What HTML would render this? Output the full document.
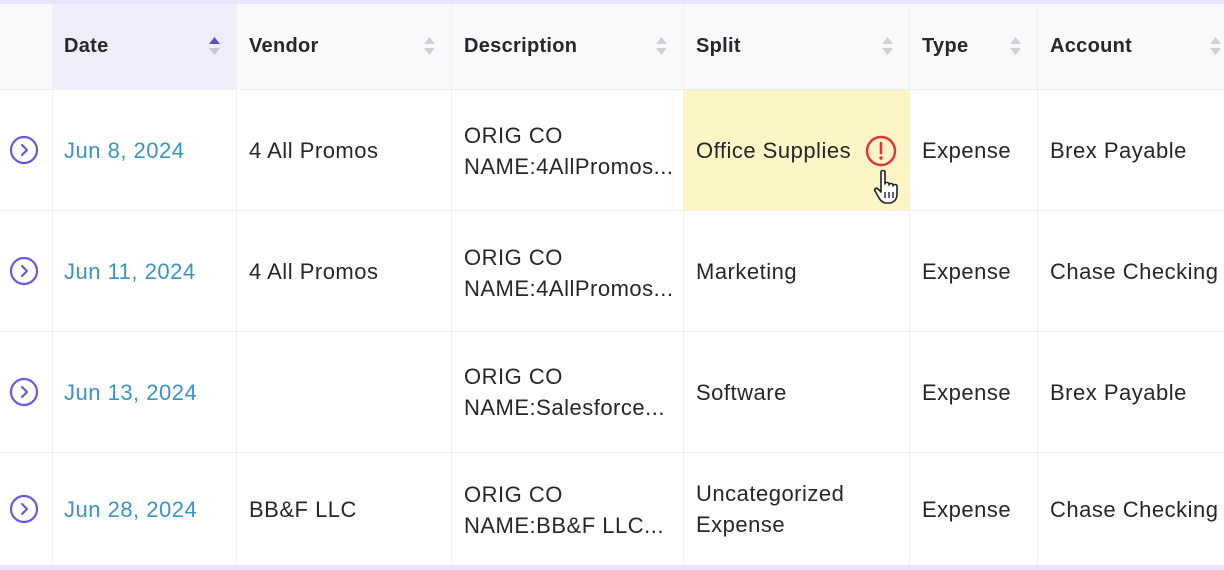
<!DOCTYPE html>
<html><head><meta charset="utf-8"><style>
*{margin:0;padding:0;box-sizing:border-box}
body{width:1224px;height:570px;overflow:hidden;background:#fff;font-family:"Liberation Sans",sans-serif;position:relative}
.topb{position:absolute;left:0;top:0;width:1224px;height:4px;background:#ebe3fb}
.botb{position:absolute;left:0;top:565px;width:1224px;height:5px;background:#ebe3fb}
.hdr{position:absolute;left:0;top:4px;width:1224px;height:86px;background:#f8f9fb;border-bottom:1px solid #eceef2}
.vl{position:absolute;top:4px;height:561px;width:1px;background:#eef0f3}
.hl{position:absolute;left:0;width:1224px;height:1px;background:#eef0f3}
.t{position:absolute;font-size:22px;color:#26262b;white-space:nowrap;line-height:31px;letter-spacing:0.5px}
.h{position:absolute;font-size:20px;font-weight:bold;color:#26262b;top:35px;letter-spacing:0.3px}
.d{color:#3a93c9}
.sort{position:absolute;top:35px;width:13px;height:22px}
.ic{position:absolute;left:9px;width:30px;height:30px}
</style></head><body>
<div class="topb"></div>
<div class="hdr"></div>
<div style="position:absolute;left:52px;top:4px;width:184px;height:86px;background:#eeeefb"></div>
<div style="position:absolute;left:684px;top:90px;width:225px;height:120px;background:#fcf5c6"></div>
<div class="vl" style="left:52px"></div><div class="vl" style="left:236px"></div><div class="vl" style="left:451px"></div><div class="vl" style="left:683px"></div><div class="vl" style="left:909px"></div><div class="vl" style="left:1037px"></div>
<div class="hl" style="top:210px"></div><div class="hl" style="top:331px"></div><div class="hl" style="top:452px"></div>
<div class="botb"></div>

<div class="h" style="left:64px">Date</div>
<div class="h" style="left:249px">Vendor</div>
<div class="h" style="left:464px">Description</div>
<div class="h" style="left:696px">Split</div>
<div class="h" style="left:922px">Type</div>
<div class="h" style="left:1050px">Account</div>
<svg class="sort" style="left:208px" viewBox="0 0 13 22"><path d="M1 9L6.5 2L12 9Z" fill="#5b4fd6"/><path d="M1 13L6.5 20L12 13Z" fill="#c9c9d2"/></svg>
<svg class="sort" style="left:423px" viewBox="0 0 13 22"><path d="M1 9L6.5 2L12 9Z" fill="#cfcfd6"/><path d="M1 13L6.5 20L12 13Z" fill="#cfcfd6"/></svg>
<svg class="sort" style="left:655px" viewBox="0 0 13 22"><path d="M1 9L6.5 2L12 9Z" fill="#cfcfd6"/><path d="M1 13L6.5 20L12 13Z" fill="#cfcfd6"/></svg>
<svg class="sort" style="left:881px" viewBox="0 0 13 22"><path d="M1 9L6.5 2L12 9Z" fill="#cfcfd6"/><path d="M1 13L6.5 20L12 13Z" fill="#cfcfd6"/></svg>
<svg class="sort" style="left:1009px" viewBox="0 0 13 22"><path d="M1 9L6.5 2L12 9Z" fill="#cfcfd6"/><path d="M1 13L6.5 20L12 13Z" fill="#cfcfd6"/></svg>
<svg class="sort" style="left:1209px" viewBox="0 0 13 22"><path d="M1 9L6.5 2L12 9Z" fill="#cfcfd6"/><path d="M1 13L6.5 20L12 13Z" fill="#cfcfd6"/></svg>

<svg class="ic" style="top:135px" viewBox="0 0 30 30"><circle cx="15" cy="15" r="13" fill="none" stroke="#6a5ad8" stroke-width="2.2"/><path d="M13 10l5 5-5 5" fill="none" stroke="#6a5ad8" stroke-width="2.2" stroke-linecap="round" stroke-linejoin="round"/></svg>
<svg class="ic" style="top:256px" viewBox="0 0 30 30"><circle cx="15" cy="15" r="13" fill="none" stroke="#6a5ad8" stroke-width="2.2"/><path d="M13 10l5 5-5 5" fill="none" stroke="#6a5ad8" stroke-width="2.2" stroke-linecap="round" stroke-linejoin="round"/></svg>
<svg class="ic" style="top:377px" viewBox="0 0 30 30"><circle cx="15" cy="15" r="13" fill="none" stroke="#6a5ad8" stroke-width="2.2"/><path d="M13 10l5 5-5 5" fill="none" stroke="#6a5ad8" stroke-width="2.2" stroke-linecap="round" stroke-linejoin="round"/></svg>
<svg class="ic" style="top:494px" viewBox="0 0 30 30"><circle cx="15" cy="15" r="13" fill="none" stroke="#6a5ad8" stroke-width="2.2"/><path d="M13 10l5 5-5 5" fill="none" stroke="#6a5ad8" stroke-width="2.2" stroke-linecap="round" stroke-linejoin="round"/></svg>

<div class="t d" style="left:64px;top:135px">Jun 8, 2024</div>
<div class="t" style="left:249px;top:135px">4 All Promos</div>
<div class="t" style="left:464px;top:120px">ORIG CO<br>NAME:4AllPromos...</div>
<div class="t" style="left:696px;top:135px">Office Supplies</div>
<svg style="position:absolute;left:865px;top:135px;width:32px;height:32px" viewBox="0 0 32 32"><circle cx="16" cy="16" r="14" fill="none" stroke="#e0343a" stroke-width="2.4"/><path d="M16 8v10" stroke="#e0343a" stroke-width="2.6" stroke-linecap="round"/><circle cx="16" cy="23" r="1.7" fill="#e0343a"/></svg>
<svg style="position:absolute;left:872px;top:168px;width:32px;height:38px" viewBox="0 0 32 38"><path d="M9 4c0-2 4-2 4 0v12c0-2 4-2 4 0v1c0-2 4-2 4 0v1c0-2 4-2 4 0v8c0 5-3 9-8 9h-3c-3 0-5-2-7-5l-4-7c-1-2 1-4 3-2l3 3V4z" fill="#fff" stroke="#222" stroke-width="1.6" stroke-linejoin="round"/><path d="M13 24v6M17 24v6M21 24v6" stroke="#222" stroke-width="1.4"/></svg>
<div class="t" style="left:922px;top:135px">Expense</div>
<div class="t" style="left:1050px;top:135px">Brex Payable</div>

<div class="t d" style="left:64px;top:256px">Jun 11, 2024</div>
<div class="t" style="left:249px;top:256px">4 All Promos</div>
<div class="t" style="left:464px;top:242px">ORIG CO<br>NAME:4AllPromos...</div>
<div class="t" style="left:696px;top:256px">Marketing</div>
<div class="t" style="left:922px;top:256px">Expense</div>
<div class="t" style="left:1050px;top:256px">Chase Checking</div>

<div class="t d" style="left:64px;top:377px">Jun 13, 2024</div>
<div class="t" style="left:464px;top:361px">ORIG CO<br>NAME:Salesforce...</div>
<div class="t" style="left:696px;top:377px">Software</div>
<div class="t" style="left:922px;top:377px">Expense</div>
<div class="t" style="left:1050px;top:377px">Brex Payable</div>

<div class="t d" style="left:64px;top:494px">Jun 28, 2024</div>
<div class="t" style="left:249px;top:494px">BB&amp;F LLC</div>
<div class="t" style="left:464px;top:479px">ORIG CO<br>NAME:BB&amp;F LLC...</div>
<div class="t" style="left:696px;top:478px">Uncategorized<br>Expense</div>
<div class="t" style="left:922px;top:494px">Expense</div>
<div class="t" style="left:1050px;top:494px">Chase Checking</div>
</body></html>
